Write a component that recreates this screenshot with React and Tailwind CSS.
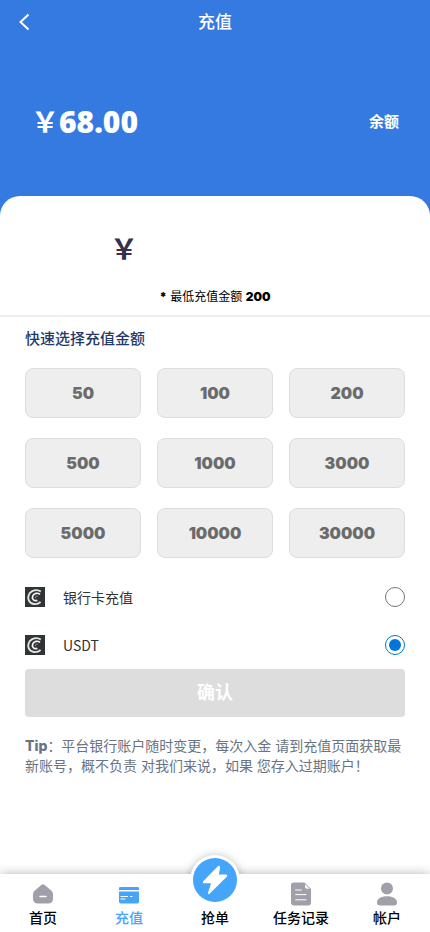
import { useState } from 'react';

const AMOUNTS = [50, 100, 200, 500, 1000, 3000, 5000, 10000, 30000];

const METHODS = [
    { id: 'bank', label: '银行卡充值' },
    { id: 'usdt', label: 'USDT' },
];

function CoinLogo() {
    return (
        <svg viewBox="0 0 20 20" className="h-5 w-5 shrink-0" fill="none" aria-hidden="true">
            <rect width="20" height="20" fill="#2f3535" />
            <path d="M15.8 4.6C13.6 3 10 2.8 7.2 4.2C3.6 6 2.4 10 3.8 13.4C5.4 17.2 11.4 18.6 15.6 15" stroke="#e2e5e5" strokeWidth="1.9" />
            <path d="M15 7.4C12.6 5.4 9.2 6.2 7.9 8.6C6.4 11.4 8.6 14.6 12.4 13.4" stroke="#f4f5f5" strokeWidth="1.7" />
            <path d="M12.6 9.2C11.2 8.8 10.4 9.6 10.4 11" stroke="#9ba1a1" strokeWidth="1" />
        </svg>
    );
}

function HomeIcon() {
    return (
        <svg viewBox="0 0 24 24" className="h-6 w-6" aria-hidden="true">
            <path d="M10.3 3.1Q12 1.6 13.7 3.1L20.2 8.4Q22 9.9 22 12V16.5Q22 21.5 17 21.5H7Q2 21.5 2 16.5V12Q2 9.9 3.8 8.4Z" fill="#a1a0aa" />
            <path d="M9 14.5H15" stroke="#fff" strokeWidth="1.4" strokeLinecap="round" />
        </svg>
    );
}

function CardIcon() {
    return (
        <svg viewBox="0 0 24 24" className="h-6 w-6" aria-hidden="true">
            <path d="M2 8V6.2Q2 5 3.2 5H20.8Q22 5 22 6.2V8Z" fill="#44a5fa" />
            <path d="M2 9.6H22V19.8Q22 21.5 20.3 21.5H3.7Q2 21.5 2 19.8Z" fill="#44a5fa" />
            <path d="M3.6 14.5H11M13 14.5H15.6M3.6 17H8.4" stroke="#fff" strokeWidth="1" />
        </svg>
    );
}

function RecordIcon() {
    return (
        <svg viewBox="0 0 24 24" className="h-6 w-6" aria-hidden="true">
            <path d="M4.5 0.5H15.4L22 7V20.5Q22 23.5 19 23.5H5Q2 23.5 2 20.5V3Q2 0.5 4.5 0.5Z" fill="#a1a0aa" />
            <path d="M16 2.2V4.8Q16 6.8 18 6.8H20.6Z" fill="#fff" />
            <path d="M6.6 8H12.4M6.6 12.6H17M6.6 17.8H17" stroke="#fff" strokeWidth="1" strokeLinecap="round" />
        </svg>
    );
}

function UserIcon() {
    return (
        <svg viewBox="0 0 24 24" className="h-6 w-6" aria-hidden="true">
            <circle cx="12" cy="6.5" r="6" fill="#a1a0aa" />
            <path d="M2 20.5C2 16.8 6 14.3 12 14.3S22 16.8 22 20.5Q22 23.5 19 23.5H5Q2 23.5 2 20.5Z" fill="#a1a0aa" />
        </svg>
    );
}

function NavItem({ label, icon, active }) {
    return (
        <a
            href="#"
            className={`flex flex-1 flex-col items-center gap-0.5 pt-2 text-sm font-medium leading-5 ${active ? 'text-[#44a5fa]' : 'text-black'}`}
        >
            {icon}
            {label}
        </a>
    );
}

export default function App() {
    const [amount, setAmount] = useState('');
    const [method, setMethod] = useState('usdt');

    return (
        <div className="flex min-h-screen flex-col bg-[#357ae1] font-['Inter','Noto_Sans_CJK_SC',sans-serif]">
            <header className="grid h-11 grid-cols-3 items-center px-4 text-white">
                <button type="button" aria-label="返回" className="justify-self-start">
                    <svg viewBox="0 0 16 20" className="h-5 w-4" fill="none" aria-hidden="true">
                        <path d="M12.5 2.5L4.5 10L12.5 17.5" stroke="#fff" strokeWidth="2" />
                    </svg>
                </button>
                <h1 className="pt-0.5 text-center text-[17px] font-medium">充值</h1>
            </header>

            <section className="flex h-38 items-center justify-between px-[31px] pt-1 text-white">
                <p className="flex items-center text-3xl">
                    <span className="font-['Noto_Sans_CJK_SC',sans-serif] text-[28px] font-bold">￥</span>
                    <span className="font-['Open_Sans',sans-serif] font-extrabold">68.00</span>
                </p>
                <p className="text-[15px] font-bold">余额</p>
            </section>

            <main className="flex-1 rounded-t-[20px] bg-white">
                <div className="flex flex-col items-center border-b-2 border-[#eeeeee] pb-[10px] pt-[30px]">
                    <label className="flex items-center text-[28px] font-bold text-[#37304a]">
                        <span className="font-['Noto_Sans_CJK_SC',sans-serif]">￥</span>
                        <input
                            type="text"
                            inputMode="numeric"
                            aria-label="充值金额"
                            value={amount}
                            onChange={(e) => setAmount(e.target.value)}
                            className="h-11 w-[182px] bg-transparent outline-none"
                        />
                    </label>
                    <p className="mt-[19px] text-xs text-black">
                        <b className="font-black">*</b> 最低充值金额 <b className="font-black">200</b>
                    </p>
                </div>

                <div className="px-[25px] pt-3">
                    <h2 className="text-[15px] font-medium leading-5 text-[#243a6b]">快速选择充值金额</h2>

                    <div className="mt-[19px] grid grid-cols-3 gap-x-4 gap-y-5">
                        {AMOUNTS.map((value) => (
                            <button
                                key={value}
                                type="button"
                                onClick={() => setAmount(String(value))}
                                className="h-[50px] rounded-lg border border-[#dddddd] bg-[#eeeeee] text-base font-black text-[#6b6b6b]"
                            >
                                {value}
                            </button>
                        ))}
                    </div>

                    <div className="mt-[15px]">
                        {METHODS.map((item) => (
                            <label key={item.id} className="flex h-12 items-center font-['Noto_Sans_CJK_SC',sans-serif] text-sm text-[#333333]">
                                <CoinLogo />
                                <span className="ml-[18px] flex-1">{item.label}</span>
                                <input
                                    type="radio"
                                    name="method"
                                    checked={method === item.id}
                                    onChange={() => setMethod(item.id)}
                                    className="h-5 w-5 accent-[#0075d7]"
                                />
                            </label>
                        ))}
                    </div>

                    <button type="button" className="h-12 w-full rounded bg-[#dddddd] text-lg font-bold text-white">
                        确认
                    </button>

                    <p className="mt-[19px] text-sm leading-5 text-[#687484]">
                        <b className="font-extrabold">Tip</b>：平台银行账户随时变更，每次入金 请到充值页面获取最新账号，概不负责 对我们来说，如果 您存入过期账户！
                    </p>
                </div>
            </main>

            <nav className="sticky bottom-0 flex h-[58px] bg-white shadow-[0_0_10px_rgba(0,0,0,0.3)]">
                <NavItem label="首页" icon={<HomeIcon />} />
                <NavItem label="充值" icon={<CardIcon />} active />
                <a href="#" className="relative flex flex-1 flex-col items-center justify-end pb-1 text-sm font-medium leading-5 text-black">
                    <span className="absolute -top-[18px] h-12 w-12 rounded-full bg-white shadow-[0_0_10px_rgba(0,0,0,0.3)]" />
                    <span className="absolute inset-x-0 top-0 h-10 bg-white" />
                    <svg viewBox="0 0 50 50" className="absolute -top-[19px] h-[50px] w-[50px]" aria-hidden="true">
                        <circle cx="25" cy="25" r="25" fill="#fff" />
                        <circle cx="25" cy="25" r="22" fill="#44a5fa" />
                        <path d="M27.8 11.2L13 26.4Q12.2 27.8 13.6 28.2H21L18 38Q18 39.8 19.6 38.8L37 21.4Q37.8 20 36.4 19.6H28.8L30.2 12.2Q29.8 10 27.8 11.2Z" fill="#fff" />
                    </svg>
                    <span className="relative">抢单</span>
                </a>
                <NavItem label="任务记录" icon={<RecordIcon />} />
                <NavItem label="帐户" icon={<UserIcon />} />
            </nav>
        </div>
    );
}
